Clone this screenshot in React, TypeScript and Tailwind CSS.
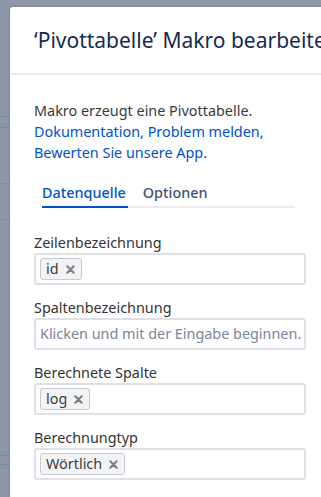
function Tag({ label }: { label: string }) {
  return (
    <span className="flex items-center gap-[7px] h-[22px] pl-[5px] pr-[6px] rounded-[3px] border border-[#c8cacf] bg-[#f2f3f5] text-[14.4px] text-[#3d3d3d]">
      {label}
      <svg viewBox="0 0 10 10" className="w-[9px] h-[9px]">
        <path d="M1.5 1.5 L8.5 8.5 M8.5 1.5 L1.5 8.5" stroke="#7c7f86" strokeWidth="2.4" strokeLinecap="round" />
      </svg>
    </span>
  )
}

function Field({ label, tag, placeholder }: { label: string; tag?: string; placeholder?: string }) {
  return (
    <div className="flex flex-col mt-[13px] first:mt-0">
      <label className="h-[20px] leading-[20px] text-[14.4px] text-[#333333]">{label}</label>
      <div className="flex items-center h-[32px] w-[272px] rounded-[3px] border-2 border-[#dfe1e6] bg-white px-[4px]">
        {tag && <Tag label={tag} />}
        {placeholder && (
          <span className="text-[14.4px] text-[#7a869a] whitespace-nowrap">{placeholder}</span>
        )}
      </div>
    </div>
  )
}

export default function App() {
  return (
    <div
      className="flex w-[321px] h-[497px] overflow-hidden bg-[#8e97a8]"
      style={{ fontFamily: '"Noto Sans", "Open Sans", sans-serif' }}
    >
      {/* page behind the blanket */}
      <div className="flex flex-col w-[10px] shrink-0">
        <div className="h-[116px]" />
        <div className="h-[1px] bg-[#7f889a]" />
        <div className="h-[10px]" />
        <div className="h-[1px] bg-[#7f889a]" />
        <div className="h-[55px]" />
        <div className="h-[1px] bg-[#848d9e]" />
        <div className="h-[35px]" />
        <div className="h-[1px] bg-[#848d9e]" />
        <div className="h-[235px]" />
        <div className="h-[1px] bg-[#7f889a]" />
        <div className="h-[8px]" />
        <div className="h-[1px] bg-[#7f889a]" />
      </div>

      {/* dialog */}
      <div className="flex flex-col w-[420px] shrink-0 mt-[7px] bg-white rounded-tl-[3px] shadow-[0_0_2px_rgba(9,30,66,0.3)]">
        <div className="h-[68px] flex items-center pl-[24px] border-b-2 border-[#ebecf0]">
          <h1 className="text-[21px] leading-[24px] text-[#172b4d] whitespace-nowrap">
            ‘Pivottabelle’ Makro bearbeiten
          </h1>
        </div>

        <div className="flex flex-col pl-[24px] pt-[25px]">
          <p className="text-[14.4px] leading-[21px] text-[#3a3a3a] w-[280px]">
            Makro erzeugt eine Pivottabelle.
            <br />
            <span className="text-[#0052cc]">Dokumentation, Problem melden,</span>
            <br />
            <span className="text-[#0052cc]">Bewerten Sie unsere App.</span>
          </p>

          <div className="flex mt-[20px] ml-[8px] w-[253px] border-b-2 border-[#ebecf0]">
            <div className="pb-[3px] -mb-[2px] border-b-2 border-[#0052cc] text-[14.4px] leading-[20px] font-medium text-[#0052cc] pr-[2px]">
              Datenquelle
            </div>
            <div className="pb-[3px] ml-[15px] text-[14.4px] leading-[20px] font-medium text-[#42526e]">
              Optionen
            </div>
          </div>

          <div className="flex flex-col mt-[25px]">
            <Field label="Zeilenbezeichnung" tag="id" />
            <Field label="Spaltenbezeichnung" placeholder="Klicken und mit der Eingabe beginnen." />
            <Field label="Berechnete Spalte" tag="log" />
            <Field label="Berechnungtyp" tag="Wörtlich" />
          </div>
        </div>
      </div>
    </div>
  )
}
